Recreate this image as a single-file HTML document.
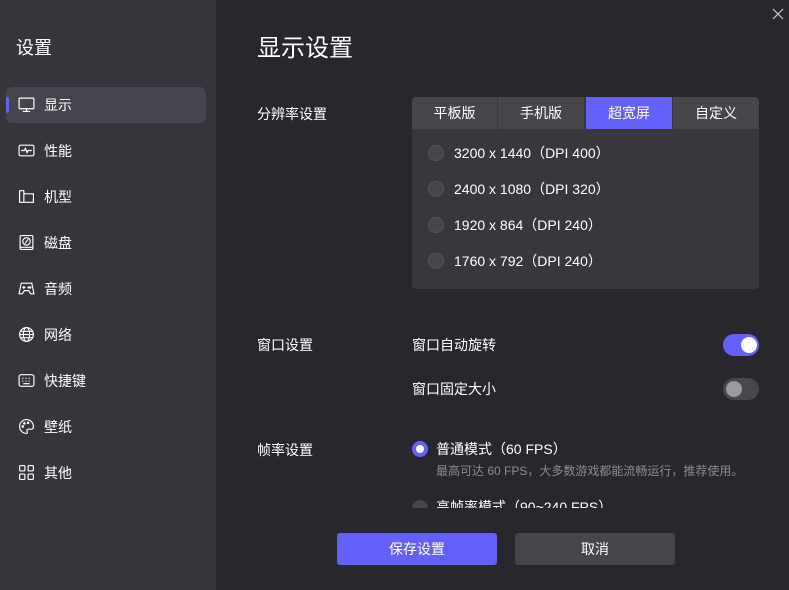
<!DOCTYPE html>
<html><head><meta charset="utf-8"><style>
*{margin:0;padding:0;box-sizing:border-box}
body{width:789px;height:590px;overflow:hidden;background:#28272d;font-family:"Liberation Sans","Noto Sans CJK SC",sans-serif;color:#fff;position:relative;font-size:14px}
.side{position:absolute;left:0;top:0;width:216px;height:590px;background:#35353b}
.abs{position:absolute;white-space:nowrap}
.item{position:absolute;left:6px;width:200px;height:36px;line-height:36px;font-size:14px}
.item svg{position:absolute;left:12px;top:9px}
.item span{position:absolute;left:38px}
.act{background:#45454d;border-radius:6px}
.act:before{content:"";position:absolute;left:0;top:10px;width:3px;height:16px;background:#6461fb;border-radius:2px}
.tab{position:absolute;top:97px;height:32px;line-height:32px;text-align:center;background:#47464d;font-size:14px}
.panel{position:absolute;left:412px;top:97px;width:347px;height:192px;background:#38373d;border-radius:4px;overflow:hidden}
.rad{position:absolute;left:428px;width:16px;height:16px;border-radius:50%;background:#45454c;border:1px solid #55555c}
.row{position:absolute;left:454px;font-size:14px;line-height:16px}
.tog{position:absolute;left:723px;width:36px;height:22px;border-radius:11px}
.knob{position:absolute;top:3px;width:16px;height:16px;border-radius:50%}
.btn{position:absolute;top:533px;width:160px;height:32px;line-height:32px;text-align:center;border-radius:3px;font-size:14px}
</style></head><body>
<div class="side">
<div class="abs" style="left:16px;top:36px;font-size:18px;line-height:24px">设置</div>
<div class="item act" style="top:87px"><svg width="17" height="17" viewBox="0 0 16 16" fill="none" stroke="#fff" stroke-width="1.1"><rect x="1" y="2" width="14" height="10" rx="1"/><path d="M8 12v2M4.5 14.5h7"/></svg><span>显示</span></div>
<div class="item" style="top:133px"><svg width="17" height="17" viewBox="0 0 16 16" fill="none" stroke="#fff" stroke-width="1.1"><rect x="1" y="3" width="14" height="10" rx="1.5"/><path d="M3 8h3l1-2 1.5 4 1-2h3.5"/></svg><span>性能</span></div>
<div class="item" style="top:179px"><svg width="17" height="17" viewBox="0 0 16 16" fill="none" stroke="#fff" stroke-width="1.1"><path d="M1.5 2.5h4v3h9v8h-13z M5.5 5.5v8"/></svg><span>机型</span></div>
<div class="item" style="top:225px"><svg width="17" height="17" viewBox="0 0 16 16" fill="none" stroke="#fff" stroke-width="1.1"><rect x="2" y="1.5" width="12" height="13" rx="1"/><circle cx="8" cy="7" r="3.5"/><path d="M6.5 9l3-4M2 12.5h12"/></svg><span>磁盘</span></div>
<div class="item" style="top:271px"><svg width="17" height="17" viewBox="0 0 16 16" fill="none" stroke="#fff" stroke-width="1.1"><path d="M3 3h10l2 10-3 0-2-3H6l-2 3H1z M4 7h3M5.5 5.5v3"/><circle cx="10" cy="7" r=".6"/><circle cx="11.5" cy="7" r=".6"/></svg><span>音频</span></div>
<div class="item" style="top:317px"><svg width="17" height="17" viewBox="0 0 16 16" fill="none" stroke="#fff" stroke-width="1.1"><circle cx="8" cy="8" r="6.5"/><ellipse cx="8" cy="8" rx="3" ry="6.5"/><path d="M1.5 8h13M2.5 5h11M2.5 11h11"/></svg><span>网络</span></div>
<div class="item" style="top:363px"><svg width="17" height="17" viewBox="0 0 16 16" fill="none" stroke="#fff" stroke-width="1.1"><rect x="1" y="2.5" width="14" height="11" rx="2"/><path d="M4 6h1M7 6h1M10 6h1M4 8.5h1M7 8.5h1M10 8.5h1M5 11h6"/></svg><span>快捷键</span></div>
<div class="item" style="top:409px"><svg width="17" height="17" viewBox="0 0 16 16" fill="none" stroke="#fff" stroke-width="1.1"><path d="M8 1.5a6.5 6.5 0 0 0 0 13c1 0 1-1 .5-2s0-2 1.5-2h2.5c1.5 0 2-1 2-2.5A6.5 6.5 0 0 0 8 1.5z"/><circle cx="4.5" cy="8" r=".7"/><circle cx="6" cy="5" r=".7"/><circle cx="9.5" cy="4.5" r=".7"/></svg><span>壁纸</span></div>
<div class="item" style="top:455px"><svg width="17" height="17" viewBox="0 0 16 16" fill="none" stroke="#fff" stroke-width="1.1"><rect x="1.5" y="1.5" width="5" height="5" rx="1"/><rect x="9.5" y="1.5" width="5" height="5" rx="1"/><rect x="1.5" y="9.5" width="5" height="5" rx="1"/><rect x="9.5" y="9.5" width="5" height="5" rx="1"/></svg><span>其他</span></div>
</div>
<svg class="abs" style="left:772px;top:8px" width="12" height="12" viewBox="0 0 12 12" stroke="#ccc" stroke-width="1.2"><path d="M1 1l10 10M11 1L1 11"/></svg>
<div class="abs" style="left:257px;top:34px;font-size:24px;line-height:30px">显示设置</div>
<div class="abs" style="left:257px;top:105px;line-height:18px">分辨率设置</div>
<div class="panel"></div>
<div class="tab" style="left:412px;width:85px;border-top-left-radius:4px">平板版</div>
<div class="tab" style="left:498px;width:86px">手机版</div>
<div class="tab" style="left:586px;width:86px;background:#6461fb">超宽屏</div>
<div class="tab" style="left:673px;width:86px;border-top-right-radius:4px">自定义</div>
<div class="rad" style="top:145px"></div><div class="row" style="top:145px">3200 x 1440（DPI 400）</div>
<div class="rad" style="top:181px"></div><div class="row" style="top:181px">2400 x 1080（DPI 320）</div>
<div class="rad" style="top:217px"></div><div class="row" style="top:217px">1920 x 864（DPI 240）</div>
<div class="rad" style="top:253px"></div><div class="row" style="top:253px">1760 x 792（DPI 240）</div>
<div class="abs" style="left:257px;top:336px;line-height:18px">窗口设置</div>
<div class="abs" style="left:412px;top:336px;line-height:18px">窗口自动旋转</div>
<div class="tog" style="top:334px;background:#6461fb"><div class="knob" style="left:18px;background:#fff"></div></div>
<div class="abs" style="left:412px;top:380px;line-height:18px">窗口固定大小</div>
<div class="tog" style="top:378px;background:#48474e"><div class="knob" style="left:3px;background:#9a9a9f"></div></div>
<div class="abs" style="left:257px;top:441px;line-height:18px">帧率设置</div>
<div class="abs" style="left:412px;top:441px;width:16px;height:16px;border-radius:50%;background:#6461fb"><div style="position:absolute;left:4px;top:4px;width:8px;height:8px;border-radius:50%;background:#fff"></div></div>
<div class="abs" style="left:436px;top:440px;line-height:18px">普通模式（60 FPS）</div>
<div class="abs" style="left:436px;top:463px;font-size:12px;line-height:16px;color:#8c8b92">最高可达 60 FPS，大多数游戏都能流畅运行，推荐使用。</div>
<div class="abs" style="left:400px;top:496px;width:389px;height:12px;overflow:hidden"><div class="abs" style="left:12px;top:4px;width:16px;height:16px;border-radius:50%;background:#45454c"></div><div class="abs" style="left:36px;top:2px;line-height:18px">高帧率模式（90~240 FPS）</div></div>
<div class="btn" style="left:337px;background:#6461fb">保存设置</div>
<div class="btn" style="left:515px;background:#45454c">取消</div>
</body></html>
